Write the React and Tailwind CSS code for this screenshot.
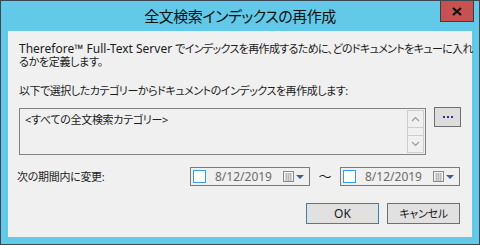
import { useState } from 'react';

function CalendarIcon() {
    return (
        <svg width="22" height="11" viewBox="0 0 22 11">
            <rect x="0.5" y="0.5" width="10" height="10" fill="#f4f4f4" stroke="#8a8a8a" />
            <path d="M2 3h7M2 5h7M2 7h7M2 9h7M3.5 2v8M5.5 2v8M7.5 2v8" stroke="#b9b9b9" strokeWidth="1" />
            <path d="M13 4h8l-4 4z" fill="#3d5f8f" />
        </svg>
    );
}

function DateBox({ value }) {
    return (
        <div className="w-[120px] h-[19px] border border-[#7a7a7a] bg-[#f0f0f0] flex items-center pl-[2px] pr-[4px]">
            <span className="w-[13px] h-[13px] border border-[#3b9ad9] bg-white" />
            <span className="ml-[9px] text-[12px] text-[#6b6b6b] leading-none">{value}</span>
            <span className="ml-auto flex items-center">
                <CalendarIcon />
            </span>
        </div>
    );
}

const jp = 'text-[11px] tracking-[-0.3px]';

export default function App() {
    const [from] = useState('8/12/2019');
    const [to] = useState('8/12/2019');

    return (
        <div
            className="relative w-[480px] h-[245px] bg-[#62c9e8] border border-[#3b4852] flex flex-col text-[#1b1b1b] [font-feature-settings:'palt']"
            style={{ fontFamily: '"Noto Sans", "Noto Sans CJK JP", sans-serif' }}
        >
            <div className="h-[30px] flex items-center justify-center text-[15px] text-[#111] pt-[1px] tracking-[-0.5px]">
                全文検索インデックスの再作成
            </div>
            <div className="absolute top-0 right-[5px] w-[34px] h-[21px] bg-[#c75050] border border-[#3d3d3d] border-t-0 flex items-center justify-center">
                <svg width="10" height="9" viewBox="0 0 10 9">
                    <path d="M1 1l8 7M9 1l-8 7" stroke="#111" strokeWidth="2.2" />
                </svg>
            </div>

            <div className="mx-[7px] h-[206px] bg-[#f0f0f0] flex flex-col pl-[11px] pr-[11px] pt-[11px] text-[12px]">
                <p className="leading-[13px] whitespace-nowrap">
                    Therefore™ Full-Text Server{' '}
                    <span className="text-[11px] tracking-[-0.65px]">でインデックスを再作成するために、どのドキュメントをキューに入れ</span>
                    <br />
                    <span className={jp}>るかを定義します。</span>
                </p>
                <p className={`mt-[16px] leading-[14px] whitespace-nowrap text-[11px] tracking-[-0.45px]`}>
                    以下で選択したカテゴリーからドキュメントのインデックスを再作成します:
                </p>

                <div className="mt-[10px] flex items-start gap-[8px]">
                    <div className="w-[407px] h-[47px] border border-[#828282] flex">
                        <div className={`flex-1 pl-[5px] pt-[4px] leading-[14px] ${jp}`}>&lt;すべての全文検索カテゴリー&gt;</div>
                        <div className="w-[17px] my-[1px] mr-[1px] border border-[#cdcdcd] flex flex-col">
                            <div className="h-[17px] border-b border-[#cdcdcd] flex items-center justify-center">
                                <svg width="9" height="6" viewBox="0 0 9 6">
                                    <path d="M1 5l3.5-3.5L8 5" stroke="#9a9a9a" fill="none" strokeWidth="1.2" />
                                </svg>
                            </div>
                            <div className="flex-1" />
                            <div className="h-[17px] border-t border-[#cdcdcd] flex items-center justify-center">
                                <svg width="9" height="6" viewBox="0 0 9 6">
                                    <path d="M1 1l3.5 3.5L8 1" stroke="#9a9a9a" fill="none" strokeWidth="1.2" />
                                </svg>
                            </div>
                        </div>
                    </div>
                    <button className="-mt-[1px] w-[27px] h-[20px] bg-[#dddddd] border border-[#707070] flex items-center justify-center">
                        <span className="flex gap-[2px]">
                            <span className="w-[2px] h-[2px] bg-[#3b2f8f]" />
                            <span className="w-[2px] h-[2px] bg-[#3b2f8f]" />
                            <span className="w-[2px] h-[2px] bg-[#3b2f8f]" />
                        </span>
                    </button>
                </div>

                <div className="mt-[12px] flex items-center">
                    <span className={`-ml-[2px] w-[173px] leading-none ${jp}`}>次の期間内に変更:</span>
                    <DateBox value={from} />
                    <span className="w-[30px] text-center text-[13px] leading-none">～</span>
                    <DateBox value={to} />
                </div>

                <div className="mt-[17px] flex justify-end gap-[8px] pr-[1px]">
                    <button className="w-[73px] h-[21px] bg-[#e1e1e1] border border-[#3c7fb1] text-[12px] leading-none">OK</button>
                    <button className={`w-[73px] h-[21px] bg-[#e1e1e1] border border-[#707070] leading-none ${jp}`}>キャンセル</button>
                </div>
            </div>
        </div>
    );
}
